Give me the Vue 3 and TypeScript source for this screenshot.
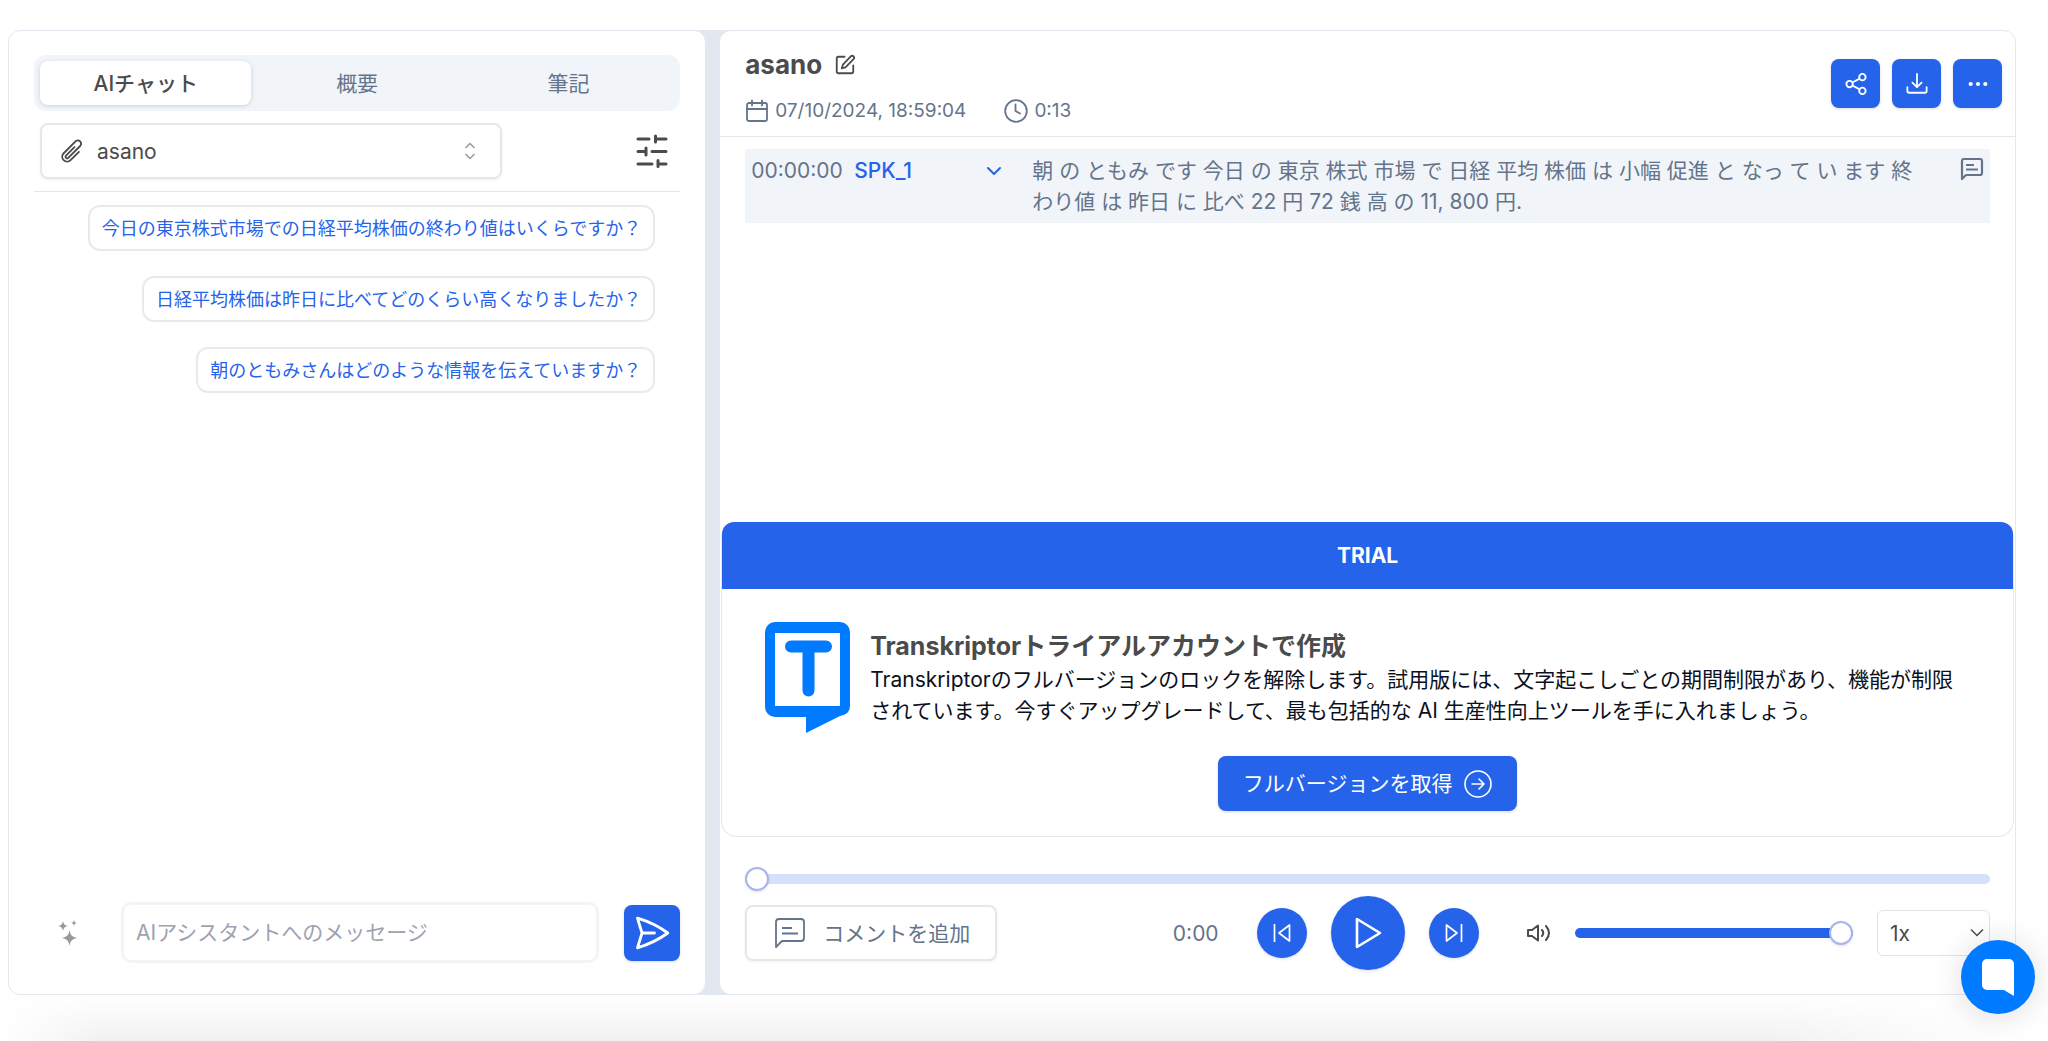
<script setup lang="ts">
import { ref } from 'vue'

type Tab = { id: string; label: string }

const tabs: Tab[] = [
  { id: 'chat', label: 'AIチャット' },
  { id: 'summary', label: '概要' },
  { id: 'notes', label: '筆記' },
]
const activeTab = ref('chat')
const suggestions: string[] = [
  '今日の東京株式市場での日経平均株価の終わり値はいくらですか？',
  '日経平均株価は昨日に比べてどのくらい高くなりましたか？',
  '朝のともみさんはどのような情報を伝えていますか？',
]
const message = ref('')
const position = ref(0)
const volume = ref(100)
const speed = ref('1')
</script>

<template>
  <div class="page">
    <main class="workspace">
      <section class="panel assistant">
        <div class="tabs" role="tablist">
          <button
            v-for="tab in tabs"
            :key="tab.id"
            type="button"
            role="tab"
            class="tab"
            :class="{ active: tab.id === activeTab }"
            :aria-selected="tab.id === activeTab"
            @click="activeTab = tab.id"
          >{{ tab.label }}</button>
        </div>

        <div class="source-row">
          <label class="source">
            <svg class="clip" viewBox="0 0 24 24" fill="none" stroke="currentColor" stroke-width="1.7" stroke-linecap="round" stroke-linejoin="round"><path d="m18.375 12.739-7.693 7.693a4.5 4.5 0 0 1-6.364-6.364l10.94-10.94A3 3 0 1 1 19.5 7.372L8.552 18.32a1.5 1.5 0 0 1-2.112-2.13l7.810-7.810" /></svg>
            <select aria-label="ファイル"><option>asano</option></select>
            <svg class="updown" viewBox="0 0 12 18" fill="none" stroke="currentColor" stroke-width="1.5"><path d="M1.5 6 6 1.5 10.5 6M1.5 12 6 16.5 10.5 12" /></svg>
          </label>
          <button type="button" class="plain tune" aria-label="設定">
            <svg viewBox="0 0 32 34" fill="none" stroke="currentColor" stroke-width="3" stroke-linecap="round"><path d="M2 5h11M20 5h10M19.5 2v6M2 17.500h7M16 17.500h14M10 14v7M2 30h14M22 30h8M22 26.5v6" /></svg>
          </button>
        </div>

        <div class="suggestions">
          <button v-for="text in suggestions" :key="text" type="button" class="chip">{{ text }}</button>
        </div>

        <form class="composer" @submit.prevent>
          <button type="button" class="plain sparkle" aria-label="プロンプト">
            <svg viewBox="0 0 20 26" fill="currentColor"><path d="M11.5 10c.8 5 2.5 6.800 7.500 8-5 1.200-6.700 3-7.500 8-.8-5-2.500-6.800-7.500-8 5-1.200 6.700-3 7.500-8ZM5 1c.5 3 1.800 4.400 5 5-3.200.6-4.500 2-5 5-.5-3-1.800-4.400-5-5 3.200-.6 4.500-2 5-5ZM16 0c.3 1.900 1.200 2.700 3 3-1.800.3-2.700 1.200-3 3-.3-1.800-1.200-2.700-3-3 1.800-.3 2.700-1.100 3-3Z" /></svg>
          </button>
          <input v-model="message" type="text" aria-label="メッセージ" placeholder="AIアシスタントへのメッセージ" />
          <button type="submit" class="send" aria-label="送信">
            <svg viewBox="0 0 24 24" fill="none" stroke="currentColor" stroke-width="1.7" stroke-linecap="round" stroke-linejoin="round"><path d="M6 12 3.269 3.125A59.769 59.769 0 0 1 21.485 12 59.768 59.768 0 0 1 3.270 20.875L5.999 12Zm0 0h7.500" /></svg>
          </button>
        </form>
      </section>

      <div class="divider" role="separator"></div>

      <section class="panel transcript">
        <header class="head">
          <div class="info">
            <div class="title">
              <h1>asano</h1>
              <button type="button" class="plain edit" aria-label="名前を編集">
                <svg viewBox="0 0 24 24" fill="none" stroke="currentColor" stroke-width="2" stroke-linecap="round" stroke-linejoin="round"><path d="M11.5 3H5a2 2 0 0 0-2 2v14a2 2 0 0 0 2 2h14a2 2 0 0 0 2-2v-6.500" /><path d="M18.300 2.700a2.100 2.100 0 0 1 3 3L12.500 14.500l-4 1.200 1.200-4Z" /></svg>
              </button>
            </div>
            <div class="meta">
              <span class="stamp">
                <svg viewBox="0 0 24 24" fill="none" stroke="currentColor" stroke-width="1.8" stroke-linecap="round" stroke-linejoin="round"><rect x="2" y="4" width="20" height="18" rx="2" /><path d="M7 1.500v5M17 1.500v5M2 10h20" /></svg>
                07/10/2024, 18:59:04
              </span>
              <span class="stamp">
                <svg viewBox="0 0 24 24" fill="none" stroke="currentColor" stroke-width="1.8" stroke-linecap="round" stroke-linejoin="round"><circle cx="12" cy="12" r="10.800" /><path d="M11.500 5.500V12l4.500 2.500" /></svg>
                0:13
              </span>
            </div>
          </div>
          <div class="actions">
            <button type="button" class="action" aria-label="共有">
              <svg viewBox="0 0 24 24" fill="none" stroke="currentColor" stroke-width="2"><circle cx="19" cy="4.500" r="3.500" /><circle cx="5" cy="12" r="3.500" /><circle cx="19" cy="19.500" r="3.500" /><path d="m8 10.300 8-4.200M8 13.700l8 4.200" /></svg>
            </button>
            <button type="button" class="action" aria-label="ダウンロード">
              <svg viewBox="0 0 24 24" fill="none" stroke="currentColor" stroke-width="2" stroke-linecap="round" stroke-linejoin="round"><path d="M1.500 15.500v4a2 2 0 0 0 2 2h17a2 2 0 0 0 2-2v-4M12 1v14.500M7 10.500l5 5 5-5" /></svg>
            </button>
            <button type="button" class="action" aria-label="その他">
              <svg viewBox="0 0 24 24" fill="currentColor"><circle cx="4" cy="12" r="2.300" /><circle cx="12" cy="12" r="2.300" /><circle cx="20" cy="12" r="2.300" /></svg>
            </button>
          </div>
        </header>

        <div class="body">
          <article class="line">
            <time>00:00:00</time>
            <button type="button" class="plain speaker">
              SPK_1
              <svg viewBox="0 0 16 16" fill="none" stroke="currentColor" stroke-width="2" stroke-linecap="round" stroke-linejoin="round"><path d="m2 5 6 6 6-6" /></svg>
            </button>
            <p>朝 の ともみ です 今日 の 東京 株式 市場 で 日経 平均 株価 は 小幅 促進 と なっ て い ます 終わり値 は 昨日 に 比べ 22 円 72 銭 高 の 11, 800 円.</p>
            <button type="button" class="plain note" aria-label="コメント">
              <svg viewBox="0 0 24 24" fill="none" stroke="currentColor" stroke-width="2.2" stroke-linejoin="round"><path d="M2 22V4a2 2 0 0 1 2-2h16a2 2 0 0 1 2 2v12a2 2 0 0 1-2 2H6ZM6 8h8M6 12.500h12" /></svg>
            </button>
          </article>
        </div>

        <section class="trial">
          <h2 class="banner">TRIAL</h2>
          <div class="pitch">
            <svg class="logo" viewBox="0 0 85 112" role="img" aria-label="Transkriptor">
              <path fill="#007bff" d="M10 0h65a10 10 0 0 1 10 10v74q0 8-10 10L41 111V95H10A10 10 0 0 1 0 85V10A10 10 0 0 1 10 0Z" />
              <rect x="10" y="11" width="65" height="73" fill="#fff" />
              <path d="M26 24.500h35M43.500 24.500v44" fill="none" stroke="#007bff" stroke-width="12" stroke-linecap="round" />
            </svg>
            <div class="copy">
              <h3>Transkriptorトライアルアカウントで作成</h3>
              <p>Transkriptorのフルバージョンのロックを解除します。試用版には、文字起こしごとの期間制限があり、機能が制限されています。今すぐアップグレードして、最も包括的な AI 生産性向上ツールを手に入れましょう。</p>
            </div>
          </div>
          <button type="button" class="upgrade">
            フルバージョンを取得
            <svg viewBox="0 0 28 28" fill="none" stroke="currentColor" stroke-width="1.6" stroke-linecap="round" stroke-linejoin="round"><circle cx="14" cy="14" r="13" /><path d="M8 14h12M15 9l5 5-5 5" /></svg>
          </button>
        </section>

        <footer class="player">
          <input v-model.number="position" class="range seek" type="range" min="0" max="13" aria-label="再生位置" />
          <div class="controls">
            <div class="side">
              <button type="button" class="comment">
                <svg viewBox="0 0 30 30" fill="none" stroke="currentColor" stroke-width="1.8" stroke-linejoin="round"><path d="M1 29V4a3 3 0 0 1 3-3h22a3 3 0 0 1 3 3v16a3 3 0 0 1-3 3H7ZM7 10h10M7 15.500h16" /></svg>
                コメントを追加
              </button>
              <span class="clock">0:00</span>
            </div>
            <div class="transport">
              <button type="button" class="round" aria-label="前へ">
                <svg viewBox="0 0 18 18" fill="none" stroke="currentColor" stroke-width="1.7" stroke-linejoin="round"><path d="M1.500 0v18M16.500 1v16L6 9Z" /></svg>
              </button>
              <button type="button" class="round play" aria-label="再生">
                <svg viewBox="0 0 30 32" fill="none" stroke="currentColor" stroke-width="2.6" stroke-linejoin="round"><path d="M4 2v28l23-14Z" /></svg>
              </button>
              <button type="button" class="round" aria-label="次へ">
                <svg viewBox="0 0 18 18" fill="none" stroke="currentColor" stroke-width="1.7" stroke-linejoin="round"><path d="M16.500 0v18M1.500 1v16L12 9Z" /></svg>
              </button>
            </div>
            <div class="side output">
              <button type="button" class="plain mute" aria-label="ミュート">
                <svg viewBox="0 0 24 18" fill="none" stroke="currentColor" stroke-width="2" stroke-linecap="round" stroke-linejoin="round"><path d="M1 6h4l6-4.500v15L5 12H1ZM15 6q2.500 3 0 6M19 2q6 7 0 14" /></svg>
              </button>
              <input v-model.number="volume" class="range volume" type="range" min="0" max="100" aria-label="音量" />
              <label class="speed">
                <select v-model="speed" aria-label="再生速度"><option value="1">1x</option></select>
                <svg viewBox="0 0 14 10" fill="none" stroke="currentColor" stroke-width="1.5"><path d="m1 1.500 6 6 6-6" /></svg>
              </label>
            </div>
          </div>
        </footer>
      </section>
    </main>
    <div class="shade"></div>
    <button type="button" class="support" aria-label="サポート">
      <svg viewBox="0 0 32 38" fill="currentColor"><path d="M5 1h22a5 5 0 0 1 5 5v31q0 1-1 .5L22 32H5a5 5 0 0 1-5-5V6a5 5 0 0 1 5-5Z" /></svg>
    </button>
  </div>
</template>

<style>
body {
  margin: 0;
  background: #fff;
}
</style>

<style scoped>
* {
  box-sizing: border-box;
}
.page {
  min-height: 100vh;
  display: flex;
  flex-direction: column;
  font-family: Inter, "Noto Sans CJK JP", sans-serif;
  font-size: 21px;
  line-height: 31px;
  color: #4b4b4b;
}
button,
input,
select {
  font: inherit;
  color: inherit;
  margin: 0;
}
button {
  padding: 0;
  border: 0;
  cursor: pointer;
}
svg {
  display: block;
  flex: none;
}
h1,
h2,
h3,
p {
  margin: 0;
}
.plain {
  background: none;
}
.workspace {
  flex: 1;
  display: grid;
  grid-template-columns: minmax(0, 35fr) 13px minmax(0, 65fr);
  margin: 30px 32px 0 8px;
  background: linear-gradient(90deg, transparent 20%, #e2e8f0 20%, #e2e8f0 50%, transparent 50%);
}
.panel {
  display: flex;
  flex-direction: column;
  background: #fff;
  border: 1px solid #e2e8f0;
  border-radius: 12px;
}
.divider {
  background: #e2e8f0;
}

/* Assistant */
.assistant {
  padding: 24px 25px 31px;
}
.tabs {
  display: flex;
  height: 56px;
  padding: 6px;
  border-radius: 12px;
  background: #f1f5f9;
}
.tab {
  flex: 1;
  border-radius: 8px;
  background: none;
  color: #64748b;
}
.tab.active {
  background: #fff;
  font-weight: 500;
  color: #4b4b4b;
  box-shadow: 0 1px 4px rgba(15, 23, 42, 0.16);
}
.source-row {
  display: flex;
  align-items: center;
  justify-content: space-between;
  padding: 12px 12px 12px 6px;
  border-bottom: 1px solid #e2e5ea;
}
.source {
  display: flex;
  align-items: center;
  gap: 12px;
  width: 462px;
  height: 56px;
  padding: 0 24px 0 17px;
  border: 2px solid #e5e7eb;
  border-radius: 8px;
  box-shadow: 0 1px 3px rgba(15, 23, 42, 0.06);
}
.source select {
  flex: 1;
  min-width: 0;
  padding: 0;
  border: 0;
  background: none;
  appearance: none;
}
.clip {
  width: 26px;
  height: 26px;
}
.updown {
  width: 12px;
  height: 18px;
  color: #999;
}
.tune svg {
  width: 32px;
  height: 34px;
}
.suggestions {
  flex: 1;
  display: flex;
  flex-direction: column;
  align-items: flex-end;
  gap: 25px;
  padding: 13px 25px 0 0;
}
.chip {
  height: 46px;
  padding: 0 12px;
  border: 2px solid #e8eaef;
  border-radius: 12px;
  background: #fff;
  font-size: 18px;
  white-space: nowrap;
  color: #2563eb;
}
.composer {
  display: flex;
  align-items: center;
  gap: 25px;
}
.sparkle {
  padding: 0 18px 0 24px;
  color: #999;
}
.sparkle svg {
  width: 20px;
  height: 26px;
}
.composer input {
  flex: 1;
  min-width: 0;
  height: 61px;
  padding: 0 12px;
  border: 3px solid #f3f4f6;
  border-radius: 10px;
  background: #fff;
}
.composer input::placeholder {
  color: #9ca3af;
  opacity: 1;
}
.send {
  display: grid;
  place-items: center;
  width: 56px;
  height: 56px;
  border-radius: 8px;
  background: #2563eb;
  color: #fff;
  box-shadow: 0 1px 3px rgba(15, 23, 42, 0.16);
}
.send svg {
  width: 40px;
  height: 40px;
}

/* Transcript */
.head {
  display: flex;
  align-items: center;
  justify-content: space-between;
  height: 106px;
  padding: 0 13px 0 25px;
  border-bottom: 1px solid #e2e8f0;
}
.info {
  padding-top: 8px;
}
.title,
.meta,
.stamp,
.actions {
  display: flex;
  align-items: center;
}
.title {
  gap: 12px;
}
h1 {
  font-size: 26px;
  line-height: 32px;
  font-weight: 700;
}
.edit svg {
  width: 22px;
  height: 22px;
}
.meta {
  gap: 38px;
  padding-top: 14px;
  font-size: 19px;
  color: #64748b;
}
.stamp {
  gap: 6px;
}
.stamp svg {
  width: 24px;
  height: 24px;
}
.actions {
  gap: 12px;
}
.action {
  display: grid;
  place-items: center;
  width: 49px;
  height: 49px;
  border-radius: 8px;
  background: #2563eb;
  color: #fff;
  box-shadow: 0 1px 3px rgba(15, 23, 42, 0.16);
}
.action svg {
  width: 22px;
  height: 22px;
}
.body {
  flex: 1;
  padding: 12px 25px;
}
.line {
  display: flex;
  align-items: flex-start;
  min-height: 74px;
  padding: 6px;
  background: #f1f5f9;
  color: #64748b;
}
.line time {
  width: 103px;
}
.speaker {
  display: flex;
  align-items: center;
  justify-content: space-between;
  width: 148px;
  font-weight: 500;
  color: #2563eb;
}
.speaker svg {
  width: 16px;
  height: 16px;
}
.line p {
  flex: 1;
  padding: 0 38px 0 30px;
}
.note {
  padding: 2px 0;
}
.note svg {
  width: 24px;
  height: 24px;
}

/* Trial card */
.trial {
  display: flex;
  flex-direction: column;
  align-items: center;
  margin: 0 1px;
  padding-bottom: 25px;
  border: 1px solid #e2e8f0;
  border-top: 0;
  border-radius: 16px;
}
.banner {
  align-self: stretch;
  border-radius: 12px 12px 0 0;
  background: #2563eb;
  color: #fff;
  font-size: 21px;
  line-height: 67px;
  font-weight: 700;
  text-align: center;
}
.pitch {
  align-self: stretch;
  display: flex;
  align-items: center;
  gap: 20px;
  padding: 33px 50px 22px 43px;
}
.logo {
  width: 85px;
  height: 112px;
}
.copy p {
  color: #0b1020;
}
h3 {
  padding-bottom: 2px;
  font-size: 25px;
  line-height: 32px;
  font-weight: 700;
}
.upgrade {
  display: flex;
  align-items: center;
  gap: 12px;
  height: 55px;
  padding: 0 25px;
  border-radius: 8px;
  background: #2563eb;
  color: #fff;
  box-shadow: 0 1px 3px rgba(15, 23, 42, 0.16);
}
.upgrade svg {
  width: 28px;
  height: 28px;
}

/* Player */
.player {
  padding: 30px 25px 24px;
}
.range {
  display: block;
  width: 100%;
  height: 24px;
  appearance: none;
  background: none;
}
.range::-webkit-slider-runnable-track {
  height: 10px;
  border-radius: 5px;
  background: #d7e0fb;
}
.volume::-webkit-slider-runnable-track {
  background: #2563eb;
}
.range::-webkit-slider-thumb {
  appearance: none;
  width: 24px;
  height: 24px;
  margin-top: -7px;
  border: 2px solid #a9b4ee;
  border-radius: 50%;
  background: #fff;
  box-shadow: 0 1px 3px rgba(15, 23, 42, 0.12);
}
.controls {
  display: grid;
  grid-template-columns: minmax(0, 1fr) auto minmax(0, 1fr);
  align-items: center;
  gap: 38px;
  padding-top: 5px;
}
.side {
  display: flex;
  align-items: center;
  justify-content: space-between;
}
.comment {
  display: flex;
  align-items: center;
  gap: 18px;
  height: 56px;
  padding: 0 25px 0 28px;
  border: 2px solid #e5e7eb;
  border-radius: 8px;
  background: #fff;
  color: #64748b;
  box-shadow: 0 1px 3px rgba(15, 23, 42, 0.06);
}
.comment svg {
  width: 30px;
  height: 30px;
}
.clock {
  color: #64748b;
}
.transport {
  display: flex;
  align-items: center;
  gap: 24px;
}
.round {
  display: grid;
  place-items: center;
  width: 50px;
  height: 50px;
  border-radius: 50%;
  background: #2563eb;
  color: #fff;
  box-shadow: 0 1px 3px rgba(15, 23, 42, 0.16);
}
.round svg {
  width: 18px;
  height: 18px;
}
.play {
  width: 74px;
  height: 74px;
}
.play svg {
  width: 30px;
  height: 32px;
}
.output {
  gap: 24px;
  padding-left: 10px;
}
.mute svg {
  width: 24px;
  height: 18px;
}
.volume {
  flex: 1;
  min-width: 0;
}
.speed {
  display: flex;
  align-items: center;
  width: 113px;
  height: 46px;
  padding: 0 5px 0 12px;
  border: 1px solid #dfe3e8;
  border-radius: 6px;
}
.speed select {
  flex: 1;
  min-width: 0;
  padding: 0;
  border: 0;
  background: none;
  appearance: none;
}
.speed svg {
  width: 14px;
  height: 10px;
}
.shade {
  height: 46px;
  background: linear-gradient(90deg, #fff, transparent 5%, transparent 86%, #fff 98%), linear-gradient(#fff, #f1f1f1);
}
.support {
  position: fixed;
  right: 13px;
  bottom: 27px;
  display: grid;
  place-items: center;
  width: 74px;
  height: 74px;
  border-radius: 50%;
  background: #007bff;
  color: #fff;
  box-shadow: 0 2px 32px rgba(0, 0, 0, 0.14);
}
.support svg {
  width: 32px;
  height: 38px;
}
</style>
